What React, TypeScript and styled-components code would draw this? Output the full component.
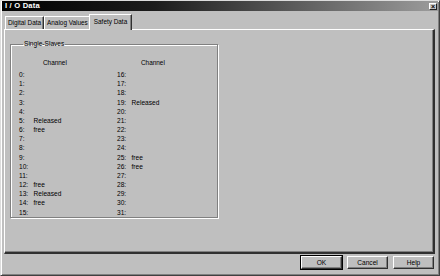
import React from 'react';
import styled, { createGlobalStyle } from 'styled-components';

const GlobalStyle = createGlobalStyle`
  html, body {
    margin: 0;
    padding: 0;
    background: #bfbfbf;
  }
  body {
    font-family: "Liberation Sans", Arial, sans-serif;
  }
`;

const Window = styled.div`
  width: 440px;
  height: 276px;
  box-sizing: border-box;
  background: #bfbfbf;
  border: 1px solid;
  border-color: #dcdcdc #404040 #404040 #dcdcdc;
  box-shadow: inset 1px 1px 0 #fff, inset -1px -1px 0 #808080;
  display: flex;
  flex-direction: column;
  overflow: hidden;
`;

const TitleBar = styled.div`
  height: 10px;
  margin: 0 1px;
  padding: 0 1px 0 3px;
  background: linear-gradient(to right, #000 0%, #1c1c1c 35%, #9c9c9c 100%);
  display: flex;
  align-items: center;
  justify-content: space-between;
`;

const Title = styled.span`
  color: #fff;
  font-size: 7.6px;
  font-weight: 700;
  line-height: 10px;
  letter-spacing: 0.2px;
`;

const CloseButton = styled.div`
  width: 8px;
  height: 7px;
  box-sizing: border-box;
  background: #c8c8c8;
  border: 1px solid;
  border-color: #fff #202020 #202020 #fff;
  display: flex;
  align-items: center;
  justify-content: center;
  font-size: 7px;
  font-weight: 700;
  line-height: 5px;
  color: #000;
`;

const Body = styled.div`
  flex: 1;
  display: flex;
  flex-direction: column;
  padding: 3px 4px 0 3px;
`;

const TabStrip = styled.div`
  height: 15px;
  display: flex;
  align-items: flex-end;
  padding-left: 1px;
  position: relative;
  z-index: 1;
`;

const Tab = styled.div<{ $active?: boolean }>`
  box-sizing: border-box;
  height: ${p => (p.$active ? '16px' : '13px')};
  margin: ${p => (p.$active ? '0 -1px -1px -2px' : '0 0 0 0')};
  padding: ${p => (p.$active ? '0 4px' : '0 2px')};
  background: #bfbfbf;
  border: 1px solid;
  border-bottom: none;
  border-color: #fff #303030 transparent #fff;
  box-shadow: inset -1px 0 0 #808080;
  font-size: 6.4px;
  line-height: ${p => (p.$active ? '13px' : '12px')};
  color: #000;
  white-space: nowrap;
`;

const Panel = styled.div`
  flex: 1;
  box-sizing: border-box;
  border: 1px solid;
  border-width: 1px 2px 2px 1px;
  border-color: #fff #303030 #303030 #fff;
  box-shadow: inset -1px -1px 0 #808080;
  padding: 10px 0 0 5px;
`;

const GroupBox = styled.fieldset`
  width: 208px;
  height: 178px;
  box-sizing: border-box;
  margin: 0;
  padding: 0 0 0 8px;
  border: 1px solid #808080;
  box-shadow: 1px 1px 0 #fff, inset 1px 1px 0 #fff;
`;

const Legend = styled.legend`
  font-size: 6.6px;
  line-height: 8px;
  padding: 0 1px;
  margin-left: 4px;
  color: #000;
`;

const Columns = styled.div`
  display: grid;
  grid-template-columns: 98px 98px;
  padding-top: 10px;
`;

const Column = styled.div`
  display: flex;
  flex-direction: column;
`;

const Header = styled.div`
  font-size: 6.4px;
  line-height: 9.17px;
  height: 9.17px;
  padding-left: 24px;
  margin-bottom: 3px;
  color: #000;
`;

const Row = styled.div`
  display: flex;
  height: 9.17px;
  font-size: 6.6px;
  line-height: 9.17px;
  color: #000;
`;

const Num = styled.span`
  width: 14.5px;
  flex-shrink: 0;
`;

const ButtonRow = styled.div`
  display: flex;
  justify-content: flex-end;
  gap: 5px;
  padding: 2px 1px 6px 0;
`;

const Button = styled.button<{ $default?: boolean }>`
  width: 41px;
  height: 13px;
  box-sizing: border-box;
  padding: 0;
  background: #bfbfbf;
  border: 1px solid;
  border-color: #fff #303030 #303030 #fff;
  box-shadow: ${p => (p.$default ? '0 0 0 1px #000, inset -1px -1px 0 #808080' : 'inset -1px -1px 0 #808080')};
  font-family: "Liberation Sans", Arial, sans-serif;
  font-size: 6.6px;
  line-height: 11px;
  color: #000;
`;

const left: Record<number, string> = { 5: 'Released', 6: 'free', 12: 'free', 13: 'Released', 14: 'free' };
const right: Record<number, string> = { 19: 'Released', 25: 'free', 26: 'free' };

const ChannelColumn: React.FC<{ start: number; values: Record<number, string> }> = ({ start, values }) => (
  <Column>
    <Header>Channel</Header>
    {Array.from({ length: 16 }, (_, i) => start + i).map(n => (
      <Row key={n}>
        <Num>{n}:</Num>
        <span>{values[n] || ''}</span>
      </Row>
    ))}
  </Column>
);

const App: React.FC = () => {
  return (
    <>
      <GlobalStyle />
      <Window>
        <TitleBar>
          <Title>I / O Data</Title>
          <CloseButton>×</CloseButton>
        </TitleBar>
        <Body>
          <TabStrip>
            <Tab>Digital Data</Tab>
            <Tab>Analog Values</Tab>
            <Tab $active>Safety Data</Tab>
          </TabStrip>
          <Panel>
            <GroupBox>
              <Legend>Single-Slaves</Legend>
              <Columns>
                <ChannelColumn start={0} values={left} />
                <ChannelColumn start={16} values={right} />
              </Columns>
            </GroupBox>
          </Panel>
          <ButtonRow>
            <Button $default>OK</Button>
            <Button>Cancel</Button>
            <Button>Help</Button>
          </ButtonRow>
        </Body>
      </Window>
    </>
  );
};

export default App;
